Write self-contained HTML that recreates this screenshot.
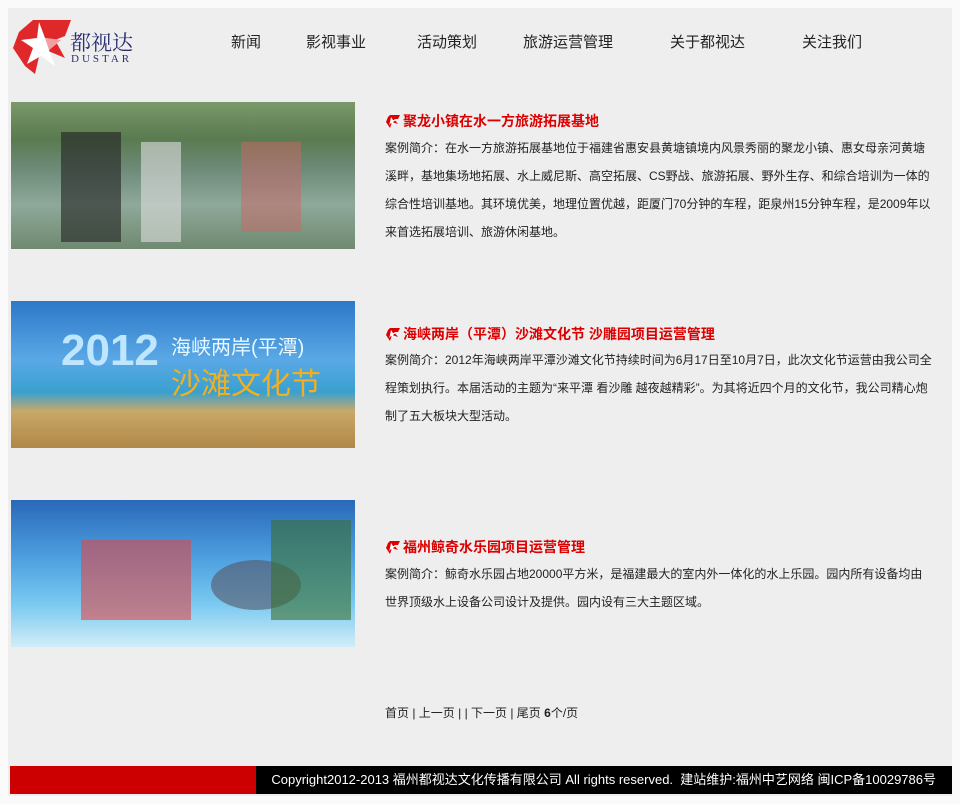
<!DOCTYPE html>
<html><head><meta charset="utf-8"><style>
*{margin:0;padding:0}
body{width:960px;height:804px;background:#fafafa;font-family:"Liberation Sans","Noto Sans CJK SC",sans-serif;position:relative;overflow:hidden}
#c{position:absolute;left:8px;top:8px;width:944px;height:788px;background:#eeeeee}
.nav{position:absolute;top:31px;font-size:15px;color:#222}
.img{position:absolute;left:11px;width:344px;height:147px;overflow:hidden}
.t{position:absolute;left:385px;font-size:14px;font-weight:bold;color:#d00;white-space:nowrap}
.t svg{vertical-align:-3px;margin-right:2px}
.d{position:absolute;left:385px;width:548px;font-size:12px;line-height:28px;color:#222}
</style></head><body>
<div id="c"></div>
<svg style="position:absolute;left:11px;top:18px" width="64" height="62" viewBox="0 0 64 62">
<path d="M22 2 L60 2 L54 18 L44 22 L54 40 L30 30 L24 56 L14 48 L2 30 L8 14 Z" fill="#e0282a"/>
<path d="M28 4 L34 20 L50 22 L38 32 L44 48 L30 38 L16 46 L22 30 L10 22 L26 20 Z" fill="#fff"/>
<path d="M34 20 L50 22 L38 32 Z" fill="#f0a0a0"/>
</svg>
<div style="position:absolute;left:70px;top:27px;font-size:21px;color:#2a2f70;font-family:'Noto Serif CJK SC',serif">都视达</div>
<div style="position:absolute;left:71px;top:53px;font-size:11px;color:#2a2f70;letter-spacing:3px;font-family:'Liberation Serif',serif">DUSTAR</div>
<div class="nav" style="left:231px">新闻</div>
<div class="nav" style="left:306px">影视事业</div>
<div class="nav" style="left:417px">活动策划</div>
<div class="nav" style="left:523px">旅游运营管理</div>
<div class="nav" style="left:670px">关于都视达</div>
<div class="nav" style="left:802px">关注我们</div>

<div class="img" style="top:102px;background:linear-gradient(180deg,#7a9a6a 0%,#5a7a50 25%,#6d8a78 45%,#8fa89a 70%,#6f8a70 100%)">
<div style="position:absolute;left:50px;top:30px;width:60px;height:110px;background:#222;opacity:.6"></div>
<div style="position:absolute;left:130px;top:40px;width:40px;height:100px;background:#ddd;opacity:.6"></div>
<div style="position:absolute;left:230px;top:40px;width:60px;height:90px;background:#c66;opacity:.5"></div>
</div>
<div class="img" style="top:301px;background:linear-gradient(180deg,#2d78c8 0%,#5aa8e6 40%,#3aa0d0 62%,#c8a868 75%,#b08848 100%)">
<div style="position:absolute;left:50px;top:25px;font-size:44px;font-weight:bold;color:#bfe6ff">2012</div>
<div style="position:absolute;left:160px;top:30px;font-size:20px;color:#e8f8ff">海峡两岸(平潭)</div>
<div style="position:absolute;left:160px;top:58px;font-size:30px;color:#f0b020">沙滩文化节</div>
</div>
<div class="img" style="top:500px;background:linear-gradient(180deg,#2a68b8 0%,#4ea0e0 40%,#78c8f0 70%,#d0eef8 100%)">
<div style="position:absolute;left:70px;top:40px;width:110px;height:80px;background:#e04848;opacity:.6"></div>
<div style="position:absolute;left:200px;top:60px;width:90px;height:50px;border-radius:50%;background:#556;opacity:.6"></div>
<div style="position:absolute;left:260px;top:20px;width:80px;height:100px;background:#3a7030;opacity:.6"></div>
</div>

<div class="t" style="top:111px"><svg width="16" height="15" viewBox="0 0 16 15"><path d="M5 1 L15 1 L13 5 L9 5 L13 10 L7 8 L5 14 L1 8 L3 3 Z" fill="#d00"/><path d="M6 3 L8 6 L11 6 L8 8 L9 11 L6 9 L4 11 L5 8 Z" fill="#fff"/></svg>聚龙小镇在水一方旅游拓展基地</div>
<div class="d" style="top:134px">案例简介：在水一方旅游拓展基地位于福建省惠安县黄塘镇境内风景秀丽的聚龙小镇、惠女母亲河黄塘溪畔，基地集场地拓展、水上威尼斯、高空拓展、CS野战、旅游拓展、野外生存、和综合培训为一体的综合性培训基地。其环境优美，地理位置优越，距厦门70分钟的车程，距泉州15分钟车程，是2009年以来首选拓展培训、旅游休闲基地。</div>

<div class="t" style="top:324px"><svg width="16" height="15" viewBox="0 0 16 15"><path d="M5 1 L15 1 L13 5 L9 5 L13 10 L7 8 L5 14 L1 8 L3 3 Z" fill="#d00"/><path d="M6 3 L8 6 L11 6 L8 8 L9 11 L6 9 L4 11 L5 8 Z" fill="#fff"/></svg>海峡两岸（平潭）沙滩文化节 沙雕园项目运营管理</div>
<div class="d" style="top:346px">案例简介：2012年海峡两岸平潭沙滩文化节持续时间为6月17日至10月7日，此次文化节运营由我公司全程策划执行。本届活动的主题为“来平潭 看沙雕 越夜越精彩”。为其将近四个月的文化节，我公司精心炮制了五大板块大型活动。</div>

<div class="t" style="top:537px"><svg width="16" height="15" viewBox="0 0 16 15"><path d="M5 1 L15 1 L13 5 L9 5 L13 10 L7 8 L5 14 L1 8 L3 3 Z" fill="#d00"/><path d="M6 3 L8 6 L11 6 L8 8 L9 11 L6 9 L4 11 L5 8 Z" fill="#fff"/></svg>福州鲸奇水乐园项目运营管理</div>
<div class="d" style="top:560px">案例简介：鲸奇水乐园占地20000平方米，是福建最大的室内外一体化的水上乐园。园内所有设备均由世界顶级水上设备公司设计及提供。园内设有三大主题区域。</div>

<div style="position:absolute;left:385px;top:704px;font-size:12px;color:#222">首页 | 上一页 | | 下一页 | 尾页 <b>6</b>个/页</div>

<div style="position:absolute;left:10px;top:766px;width:246px;height:28px;background:#cc0000"></div>
<div style="position:absolute;left:256px;top:766px;width:696px;height:28px;background:#000;color:#fff;font-size:13px;line-height:28px;text-align:right;padding-right:16px;box-sizing:border-box;white-space:nowrap">Copyright2012-2013 福州都视达文化传播有限公司 All rights reserved.&nbsp; 建站维护:福州中艺网络 闽ICP备10029786号</div>
</body></html>
